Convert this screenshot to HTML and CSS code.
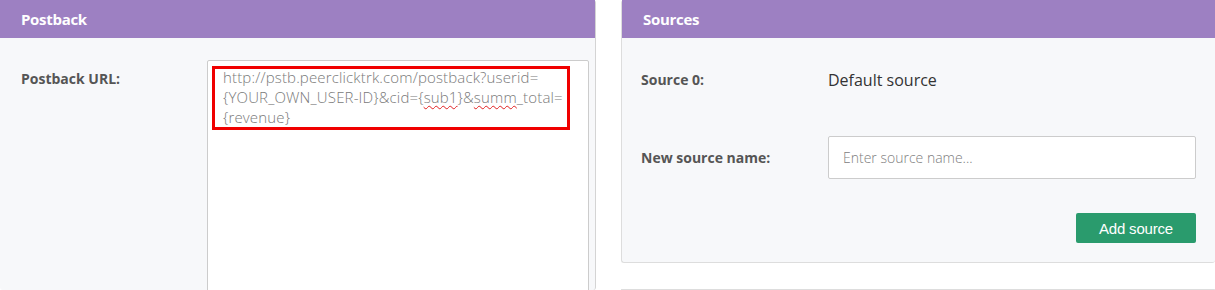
FILE: index.html
```html
<html lang="en">
<head>
  <link rel="stylesheet" href="styles.css">
</head>
<body>
  <div class="pagina">
    <div class="panel panel-izq">
      <div class="cabecera">Postback</div>
      <div class="cuerpo fila-url">
        <div class="etiqueta">Postback URL:</div>
        <div class="caja-url">
          <div class="texto-url">
            http://pstb.peerclicktrk.com/postback?userid=<br>
            {YOUR_OWN_USER-ID}&amp;cid={<span class="falta">sub1</span>}&amp;<span class="falta">summ</span>_total=<br>
            {revenue}
          </div>
          <div class="marca-roja"></div>
        </div>
      </div>
    </div>

    <div class="columna-der">
      <div class="panel panel-der">
        <div class="cabecera">Sources</div>
        <div class="cuerpo">
          <div class="fila fila-fuente">
            <div class="etiqueta">Source 0:</div>
            <div class="valor">Default source</div>
          </div>
          <div class="fila fila-nueva">
            <div class="etiqueta">New source name:</div>
            <input class="campo" type="text" placeholder="Enter source name...">
          </div>
          <div class="acciones">
            <button class="boton-verde">Add source</button>
          </div>
        </div>
      </div>
      <div class="panel panel-siguiente"></div>
    </div>
  </div>
</body>
</html>
```

FILE: styles.css
```css
body {
    margin: 0;
    background-color: #ffffff;
    font-family: "Open Sans", "Liberation Sans", sans-serif;
    overflow: hidden;
}

.pagina {
    display: flex;
    gap: 25px;
    height: 290px;
}

.panel {
    background-color: #f7f8fa;
    border-radius: 3px;
}

.cabecera {
    height: 38px;
    line-height: 38px;
    padding-left: 21px;
    background-color: #9d80c2;
    color: #ffffff;
    font-size: 15px;
    font-weight: 700;
    letter-spacing: -0.3px;
}

.etiqueta {
    color: #555555;
    font-size: 14px;
    font-weight: 700;
}

/* panel izquierdo */
.panel-izq {
    width: 595px;
    border-right: 1px solid #d4d4d4;
    flex-shrink: 0;
}

.fila-url {
    display: flex;
    padding: 22px 0 0 21px;
}

.fila-url .etiqueta {
    width: 186px;
    padding-top: 9px;
}

.caja-url {
    position: relative;
    width: 365px;
    height: 260px;
    background-color: #ffffff;
    border: 1px solid #cccccc;
    border-radius: 2px;
    padding: 6px 0 0 15px;
}

.texto-url {
    color: #7a7a7a;
    font-size: 15px;
    line-height: 20px;
    font-weight: 300;
    letter-spacing: 0.15px;
}

.falta {
    text-decoration: underline wavy #e02020;
    text-decoration-thickness: 1px;
    text-underline-offset: 2px;
}

.marca-roja {
    position: absolute;
    left: 4px;
    top: 5px;
    width: 352px;
    height: 58px;
    border: 3px solid #f00000;
}

/* panel derecho */
.columna-der {
    flex: 1;
    display: flex;
    flex-direction: column;
}

.panel-der {
    border-left: 1px solid #dddddd;
    border-bottom: 1px solid #dddddd;
}

.panel-der .cuerpo {
    padding: 24px 19px 19px 19px;
}

.fila {
    display: flex;
    align-items: center;
}

.fila .etiqueta {
    width: 187px;
}

.fila-fuente {
    height: 35px;
}

.valor {
    color: #333333;
    font-size: 16px;
}

.fila-nueva {
    margin-top: 39px;
}

.campo {
    flex: 1;
    height: 43px;
    box-sizing: border-box;
    border: 1px solid #cccccc;
    border-radius: 2px;
    padding: 0 14px;
    font-family: "Open Sans", sans-serif;
    font-size: 14px;
    font-weight: 300;
    background-color: #ffffff;
}

.campo::placeholder {
    color: #808080;
}

.acciones {
    display: flex;
    justify-content: flex-end;
    margin-top: 34px;
}

.boton-verde {
    width: 120px;
    height: 30px;
    border: none;
    border-radius: 2px;
    background-color: #2a9b6d;
    color: #ffffff;
    font-family: "Liberation Sans", Arial, sans-serif;
    font-size: 15px;
    letter-spacing: -0.2px;
}

.panel-siguiente {
    margin-top: 26px;
    border-top: 1px solid #dddddd;
    border-left: 1px solid #dddddd;
    height: 40px;
}
```
